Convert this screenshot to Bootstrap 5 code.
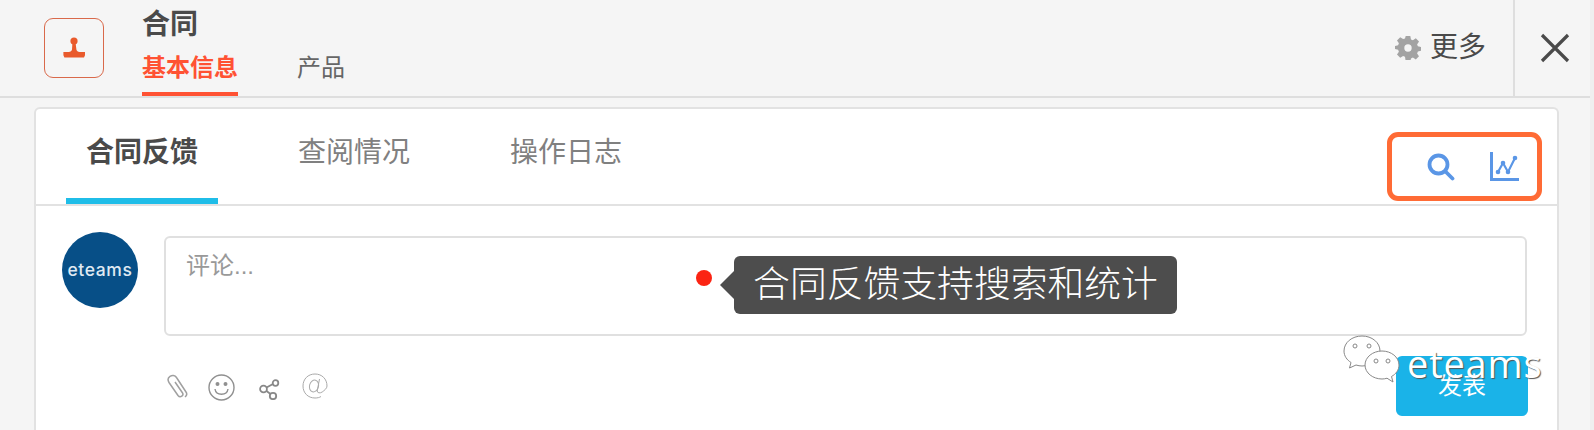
<!DOCTYPE html>
<html lang="zh">
<head>
  <meta charset="UTF-8">
  <meta name="viewport" content="width=device-width, initial-scale=1.0">
  <title>合同反馈</title>
  <link href="https://cdn.jsdelivr.net/npm/bootstrap@5.3.0/dist/css/bootstrap.min.css" rel="stylesheet">
  <style>
    html, body { height: 430px; overflow: hidden; }
    body { font-family: "Liberation Sans", "Noto Sans CJK SC", sans-serif; background: #f5f5f5; color: #4a4a4a; position: relative; }
    .top-bar { height: 98px; border-bottom: 2px solid #dedede; padding-left: 44px; }
    .stamp-box { width: 60px; height: 60px; border: 1px solid #d9694a; border-radius: 9px; margin-top: 18px; }
    .top-info { margin-left: 38px; }
    .top-title { font-size: 28px; font-weight: 700; line-height: 38px; margin-top: 6px; }
    .top-tabs { gap: 59px; margin-top: 2px; }
    .top-tab { font-size: 24px; line-height: 44px; height: 50px; color: #666; }
    .top-tab-on { color: #ff5233; font-weight: 700; border-bottom: 4px solid #ff5233; }
    .more-btn { font-size: 28px; margin-right: 27px; color: #4a4a4a; gap: 9px; margin-top: -1px; }
    .close-btn { width: 81px; border-left: 2px solid #dedede; }
    .main-card { margin: 9px 35px 0 34px; height: 340px; border: 2px solid #e2e2e2; border-bottom: 0; border-radius: 6px 6px 0 0; background: #fff; }
    .tab-row { height: 97px; border-bottom: 2px solid #e2e2e2; padding: 0 15px 0 30px; }
    .feed-tabs { gap: 60px; }
    .feed-tab { width: 152px; height: 95px; line-height: 88px; text-align: center; font-size: 28px; color: #808080; border-bottom: 6px solid transparent; }
    .feed-tab-on { color: #4a4a4a; font-weight: 700; border-bottom-color: #1fbde8; }
    .tool-box { width: 155px; height: 69px; margin-top: 23px; border: 5px solid #ff6b35; border-radius: 11px; gap: 35px; padding-right: 18px; }
    .comment-area { padding: 28px 30px 0 26px; gap: 26px; }
    .avatar-logo { width: 76px; height: 76px; flex: none; background: #074f87; color: #dfe9f2; font-family: "Inter", sans-serif; font-size: 17.500px; font-weight: 500; letter-spacing: .6px; margin-top: -2px; }
    .comment-box { height: 100px; border: 2px solid #e0e0e0; border-radius: 6px; margin-top: 2px; padding: 13px 20px; font-size: 24px; line-height: 30px; color: #999; }
    .action-row { padding: 20px 0 0 0; margin: 0 29px 0 130px; }
    .action-icons { gap: 18px; padding-top: 18px; }
    .send-btn { width: 132px; height: 60px; font-size: 24px; background: #1ab3e8; border: 0; border-radius: 6px; color: #fff; padding: 0; }
    .ico-share { margin: 5px 0 0 6px; }
    .ico-at { margin: -1px 0 0 4px; }
    .hint-dot { left: 696px; top: 270px; width: 16px; height: 16px; background: #fb2413; }
    .hint-bubble { left: 734px; top: 256px; width: 443px; height: 58px; background: #4d4d4d; color: #fff; border-radius: 6px; font-size: 36.800px; font-weight: 300; line-height: 57px; text-align: center; }
    .hint-bubble::before { content: ""; position: absolute; left: -14px; top: 15px; border: 14px solid transparent; border-left: 0; border-right-color: #4d4d4d; }
    .mark-logo { left: 1343px; top: 335px; gap: 6px; color: #fff; font-family: "Open Sans", sans-serif; font-size: 38px; line-height: 56px; letter-spacing: .8px; text-shadow: 1px 1px 1px #555; }
    .edge-shade { right: 0; top: 0; width: 4px; height: 430px; background: #efefef; }
  </style>
</head>
<body>
  <!-- 顶部 -->
  <div class="top-bar d-flex">
    <div class="stamp-box d-flex align-items-center justify-content-center">
      <svg width="26" height="26" viewBox="0 0 26 26" fill="#e95a2c"><circle cx="13" cy="6" r="3.600"/><path d="M11.400 8h3.200l.8 6.500c.3 1.500 1.500 2.500 3.200 2.500h5.400v3.200l-1 2.300H3.400l-1-2.300V17h5.400c1.700 0 2.900-1 3.200-2.500z"/></svg>
    </div>
    <div class="top-info flex-grow-1">
      <div class="top-title">合同</div>
      <div class="top-tabs d-flex">
        <div class="top-tab top-tab-on">基本信息</div>
        <div class="top-tab">产品</div>
      </div>
    </div>
    <div class="more-btn d-flex align-items-center">
      <svg width="26" height="24" viewBox="-1 0 26 24" fill="#a3a3a3"><path fill-rule="evenodd" d="M9.700 0h4.600l.7 3.400 1.900.8 2.900-1.900 3.200 3.200-1.900 2.900.8 1.900 3.100.7v3.800l-3.100.7-.8 1.900 1.900 2.900-3.200 3.200-2.900-1.900-1.900.8-.7 3.100H9.700L9 20.700l-1.900-.8-2.900 1.900L1 18.600l1.900-2.900-.8-1.900-3.100-.7V9.900l3.100-.7.800-1.900L1 4.400l3.200-3.200 2.900 1.900L9 2.400zM12 8.300a3.700 3.700 0 1 0 0 7.400 3.700 3.700 0 0 0 0-7.400z"/></svg>
      <span>更多</span>
    </div>
    <div class="close-btn d-flex align-items-center justify-content-center">
      <svg width="30" height="30" viewBox="0 0 30 30" stroke="#4a4a4a" stroke-width="3.200" fill="none"><path d="M2 2l26 26M28 2L2 28"/></svg>
    </div>
  </div>

  <div class="main-card">
    <div class="tab-row d-flex justify-content-between">
      <div class="feed-tabs d-flex">
        <div class="feed-tab feed-tab-on">合同反馈</div>
        <div class="feed-tab">查阅情况</div>
        <div class="feed-tab">操作日志</div>
      </div>
      <div class="tool-box d-flex align-items-center justify-content-end">
        <svg width="28" height="28" viewBox="0 0 28 28" fill="none" stroke="#5a96e6" stroke-width="3.800" stroke-linecap="round"><circle cx="11.500" cy="11.500" r="9"/><path d="M18.500 18.500l7 7"/></svg>
        <svg width="29" height="29" viewBox="0 0 29 29" fill="none" stroke="#5a96e6"><path d="M1.500 0v27.500H29" stroke-width="3"/><path d="M8 20l5-9 5 9 7-14" stroke-width="2.200"/><g fill="#5a96e6" stroke="none"><circle cx="8" cy="20" r="2.300"/><circle cx="13" cy="11" r="2.300"/><circle cx="18" cy="20" r="2.300"/><circle cx="25" cy="6" r="2.300"/></g></svg>
      </div>
    </div>
    <div class="comment-area d-flex">
      <div class="avatar-logo rounded-circle d-flex align-items-center justify-content-center">eteams</div>
      <div class="comment-box flex-grow-1">评论...</div>
    </div>
    <div class="action-row d-flex justify-content-between">
      <div class="action-icons d-flex">
        <svg width="24" height="26" viewBox="0 0 24 26" fill="none" stroke="#a0a0a0" stroke-width="1.500"><path d="M19 23c2-1.500 2-3.500 1-5L10.500 3.500C9 1 6 1 4 2.300 2 3.700 1.500 6 3 8.500l9 13c1 1.300 2.500 1.600 3.800.7 1.200-.8 1.400-2.200.6-3.500L9 8"/></svg>
        <svg width="27" height="27" viewBox="0 0 27 27" fill="none" stroke="#909090" stroke-width="1.400"><circle cx="13.500" cy="13.500" r="12.500"/><path d="M7 15c1 7 12 7 13 0"/><circle cx="9.500" cy="10" r="1.300" fill="#909090"/><circle cx="17.500" cy="10" r="1.300" fill="#909090"/></svg>
        <svg class="ico-share" width="21" height="21" viewBox="0 0 21 21" fill="none" stroke="#888" stroke-width="1.800"><circle cx="4.500" cy="10" r="3.400"/><circle cx="16.500" cy="4" r="2.800"/><circle cx="14" cy="17" r="3.200"/><path d="M7.500 8.500l6.500-3.500M7.500 12l4 3"/></svg>
        <svg class="ico-at" width="26" height="26" viewBox="0 0 26 26" fill="none" stroke="#aaa" stroke-width="1"><path d="M25 13c0-7-5-12-12-12S1 6 1 13s5 12 12 12c2.500 0 4.500-.5 6-1.500"/><ellipse cx="12" cy="13" rx="4.500" ry="6" transform="rotate(15 12 13)"/><path d="M17.500 6l-2.300 12c0 2 3 2.500 5 1s4.800-3.500 4.800-6"/></svg>
      </div>
      <button class="btn send-btn" type="button">发表</button>
    </div>
  </div>

  <!-- 提示 -->
  <div class="hint-dot position-absolute rounded-circle"></div>
  <div class="hint-bubble position-absolute">合同反馈支持搜索和统计</div>

  <!-- 水印 -->
  <div class="mark-logo position-absolute d-flex">
    <svg width="58" height="52" viewBox="0 0 58 52" stroke="#888" stroke-width="1" fill="#fff"><path d="M19 1C9 1 1 7.500 1 16c0 5 3 9 7 11.500L6.500 33l6.500-3c2 .6 4 1 6 1 10 0 18-6.500 18-15S29 1 19 1z"/><path d="M39 16c-9 0-17 6-17 14s8 14 17 14c2 0 3.500-.3 5-.8L50 47l-1.500-5.500C53 39 56 35 56 30c0-8-8-14-17-14z"/><g fill="none"><circle cx="12" cy="11" r="2"/><circle cx="26" cy="11" r="2"/><circle cx="33" cy="26" r="2"/><circle cx="45" cy="26" r="2"/></g></svg>
    <span>eteams</span>
  </div>
  <div class="edge-shade position-absolute"></div>
  <script src="https://cdn.jsdelivr.net/npm/bootstrap@5.3.0/dist/js/bootstrap.bundle.min.js"></script>
</body>
</html>
